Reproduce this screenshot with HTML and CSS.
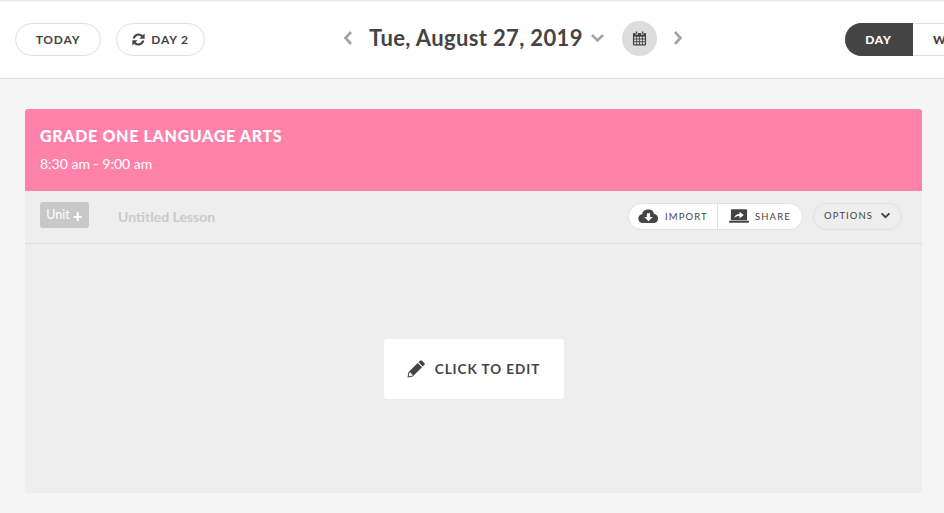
FILE: index.html
```html
<!DOCTYPE html>
<html lang="en">
<head>
<meta charset="utf-8">
<title>Planner</title>
<link rel="stylesheet" href="styles.css">
</head>
<body>
<header class="topbar">
  <button class="pill pill-today">TODAY</button>
  <button class="pill pill-cycle">
    <svg class="ico-sync" viewBox="3 3 18 18"><path d="M4 10.500a8.200 8.200 0 0 1 14-4.400L20.500 3.600V11h-7.400l2.800-2.800a5.300 5.300 0 0 0-8.900 2.300H4zM20 13.500a8.200 8.200 0 0 1-14 4.400L3.500 20.400V13h7.400l-2.800 2.800a5.300 5.300 0 0 0 8.900-2.300H20z"/></svg>
    DAY 2
  </button>
  <nav class="datenav">
    <svg class="chev" viewBox="0 0 10 16"><path d="M8 2 2.500 8 8 14"/></svg>
    <span class="date">Tue, August 27, 2019</span>
    <svg class="caret" viewBox="0 0 15 10"><path d="M2 2 7.500 7.500 13 2"/></svg>
    <span class="calbtn">
      <svg viewBox="0 0 16 16"><path d="M4 0.500h1.500V3H4zM10.500 0.500H12V3h-1.500z"/><path fill-rule="evenodd" d="M2 2h1.500v1.700h3V2h3v1.700h3V2H14a1 1 0 0 1 1 1v11.500a1 1 0 0 1-1 1H2a1 1 0 0 1-1-1V3a1 1 0 0 1 1-1zM2.300 6v2h2.300V6zM5.500 6v2h2.100V6zM8.500 6v2h2.100V6zM11.500 6v2h2.200V6zM2.300 9v2h2.300V9zM5.500 9v2h2.100V9zM8.500 9v2h2.100V9zM11.500 9v2h2.200V9zM2.300 12v2h2.300v-2zM5.500 12v2h2.100v-2zM8.500 12v2h2.100v-2zM11.500 12v2h2.200v-2z"/></svg>
    </span>
    <svg class="chev chev-next" viewBox="0 0 10 16"><path d="M2 2 7.500 8 2 14"/></svg>
  </nav>
  <div class="viewswitch">
    <span class="view view-on">DAY</span>
    <span class="view view-off">WEEK</span>
  </div>
</header>
<main class="page">
  <section class="card">
    <div class="card-head">
      <h1 class="card-title">GRADE ONE LANGUAGE ARTS</h1>
      <p class="card-time">8:30 am - 9:00 am</p>
    </div>
    <div class="card-tools">
      <span class="unit">Unit <b class="unit-plus">+</b></span>
      <span class="lesson">Untitled Lesson</span>
      <div class="io">
        <span class="io-btn io-import">
          <svg class="ico-cloud" viewBox="0 0 22 15"><path fill-rule="evenodd" d="M5 15a4.800 4.800 0 0 1-1-9.500A6.500 6.500 0 0 1 11 .500a6 6 0 0 1 6 4.800A4.900 4.900 0 0 1 17 15zM9.300 4.500v4H6.500l4.500 4.500 4.500-4.500h-2.800v-4z"/></svg>
          IMPORT
        </span>
        <span class="io-btn io-share">
          <svg class="ico-share" viewBox="0 0 21 14"><path fill-rule="evenodd" d="M3 0h15a1 1 0 0 1 1 1v10.500H2V1a1 1 0 0 1 1-1zM5.500 9c.6-2.500 2.500-4 5.500-4V2.500L15.500 6 11 9.500V7C8.800 7 7 7.700 5.500 9z"/><path d="M0 12h21v1a1 1 0 0 1-1 1H1a1 1 0 0 1-1-1z"/></svg>
          SHARE
        </span>
      </div>
      <span class="options">OPTIONS
        <svg class="ico-down" viewBox="0 0 12 8"><path d="M1.500 1.500 6 6l4.500-4.500"/></svg>
      </span>
    </div>
    <div class="card-body">
      <button class="edit">
        <svg class="ico-pencil" viewBox="0 0 18 18"><path fill-rule="evenodd" d="M13 .700a1.500 1.500 0 0 1 2.100 0l2.200 2.200a1.500 1.500 0 0 1 0 2.100l-1.500 1.500-4.300-4.300zM10.700 3l4.300 4.300-9.300 9.300L.500 17.500l.9-5.200zM3 12.200l-.8.8-.5 3.300 3.300-.5.800-.8z"/></svg>
        CLICK TO EDIT
      </button>
    </div>
  </section>
</main>
</body>
</html>
```
FILE: styles.css
```css
* { box-sizing: border-box; }
html, body { margin: 0; height: 100%; overflow: hidden; }
body {
  background: #f5f5f5;
  font-family: "Lato", "Open Sans", sans-serif;
  color: #444;
}
.topbar {
  height: 79px;
  background: #fff;
  border-bottom: 1px solid #dcdcdc;
  box-shadow: inset 0 2px 2px -1px #ddd;
  display: flex;
  align-items: center;
  padding: 0 0 2px 15px;
  overflow: hidden;
}
.pill {
  height: 33px;
  margin-top: 3px;
  border: 1px solid #e0e0e0;
  border-radius: 17px;
  background: #fff;
  color: #444;
  font: 700 12px "Lato", sans-serif;
  letter-spacing: 0.8px;
  display: flex;
  align-items: center;
  justify-content: center;
  flex: none;
  padding: 0;
}
.pill-today { width: 86px; }
.pill-cycle { width: 89px; margin-left: 15px; gap: 6px; }
.ico-sync { width: 13px; height: 13px; fill: #444; }
.datenav {
  display: flex;
  align-items: center;
  margin-left: 138px;
  flex: none;
}
.chev { width: 10px; height: 16px; fill: none; stroke: #a3a3a3; stroke-width: 2.6; }
.date {
  margin-left: 16px;
  width: 213px;
  font-size: 22px;
  line-height: 26px;
  font-weight: 700;
  letter-spacing: 0.35px;
  white-space: nowrap;
  color: #444;
}
.caret { width: 15px; height: 10px; margin-left: 8px; fill: none; stroke: #a3a3a3; stroke-width: 2.6; }
.calbtn {
  width: 35px;
  height: 35px;
  margin-left: 17px;
  border-radius: 50%;
  background: #ddd;
  display: flex;
  align-items: center;
  justify-content: center;
}
.calbtn svg { width: 15px; height: 15px; fill: #444; }
.chev-next { margin-left: 16px; }
.viewswitch {
  display: flex;
  margin-left: 162px;
  margin-top: 3px;
  flex: none;
}
.view {
  height: 33px;
  display: flex;
  align-items: center;
  font-size: 12px;
  font-weight: 900;
  letter-spacing: 0.8px;
  border: 1px solid #e0e0e0;
  border-left: 0;
  background: #fff;
  color: #444;
}
.view-on {
  width: 68px;
  justify-content: center;
  background: #444;
  border-color: #444;
  color: #fff;
  border-radius: 17px 0 0 17px;
}
.view-off { width: 68px; padding-left: 20px; }
.page { padding: 30px 22px 0 25px; }
.card { border-radius: 3px; overflow: hidden; height: 384px; display: flex; flex-direction: column; }
.card-head {
  height: 82px;
  background: #ff82aa;
  color: #fff;
  padding: 17px 15px 0;
}
.card-title {
  margin: 0;
  font-size: 16px;
  line-height: 20px;
  font-weight: 900;
  letter-spacing: 0.68px;
}
.card-time { margin: 9px 0 0; font-size: 14px; line-height: 18px; font-weight: 400; color: #fff; }
.card-tools {
  height: 53px;
  background: #eee;
  border-bottom: 1px solid #dcdcdc;
  display: flex;
  align-items: center;
  padding: 0 20px 1px 15px;
}
.unit {
  width: 49px;
  height: 26px;
  margin-top: -3px;
  padding-bottom: 2px;
  background: #c8c8c8;
  border-radius: 3px;
  color: #fff;
  font-size: 12.500px;
  display: flex;
  align-items: center;
  justify-content: center;
  gap: 3px;
}
.unit-plus { font-size: 17px; line-height: 16px; margin-top: 3px; font-weight: 900; }
.lesson {
  margin-left: 29px;
  font-size: 14px;
  font-weight: 700;
  color: #cbcbcb;
  flex: 1;
}
.io {
  display: flex;
  width: 175px;
  height: 27px;
  background: #fff;
  border: 1px solid #e2e2e2;
  border-radius: 14px;
}
.io-btn {
  display: flex;
  align-items: center;
  font-size: 9.500px;
  letter-spacing: 1.100px;
  color: #444;
  padding-bottom: 1px;
}
.io-import { width: 89px; padding-left: 9px; gap: 6px; border-right: 1px solid #ddd; }
.io-share { padding-left: 11px; gap: 6px; }
.ico-cloud { width: 21px; height: 14px; fill: #444; }
.ico-share { width: 20px; height: 14px; fill: #444; }
.options {
  width: 89px;
  height: 27px;
  margin-left: 10px;
  margin-top: -1px;
  border: 1px solid #e0e0e0;
  border-radius: 14px;
  display: flex;
  align-items: center;
  padding: 0 0 1px 10px;
  gap: 7px;
  font-size: 9.500px;
  letter-spacing: 1.050px;
  color: #444;
}
.ico-down { width: 11px; height: 7px; fill: none; stroke: #444; stroke-width: 2.2; }
.card-body {
  flex: 1;
  background: #eee;
  display: flex;
  align-items: center;
  justify-content: center;
  padding-top: 1px;
}
.edit {
  width: 180px;
  height: 60px;
  border: 0;
  border-radius: 3px;
  background: #fff;
  color: #444;
  font: 700 13.500px "Lato", sans-serif;
  letter-spacing: 0.950px;
  display: flex;
  align-items: center;
  justify-content: center;
  gap: 10px;
  padding: 0;
}
.ico-pencil { width: 18px; height: 18px; fill: #444; }
```
